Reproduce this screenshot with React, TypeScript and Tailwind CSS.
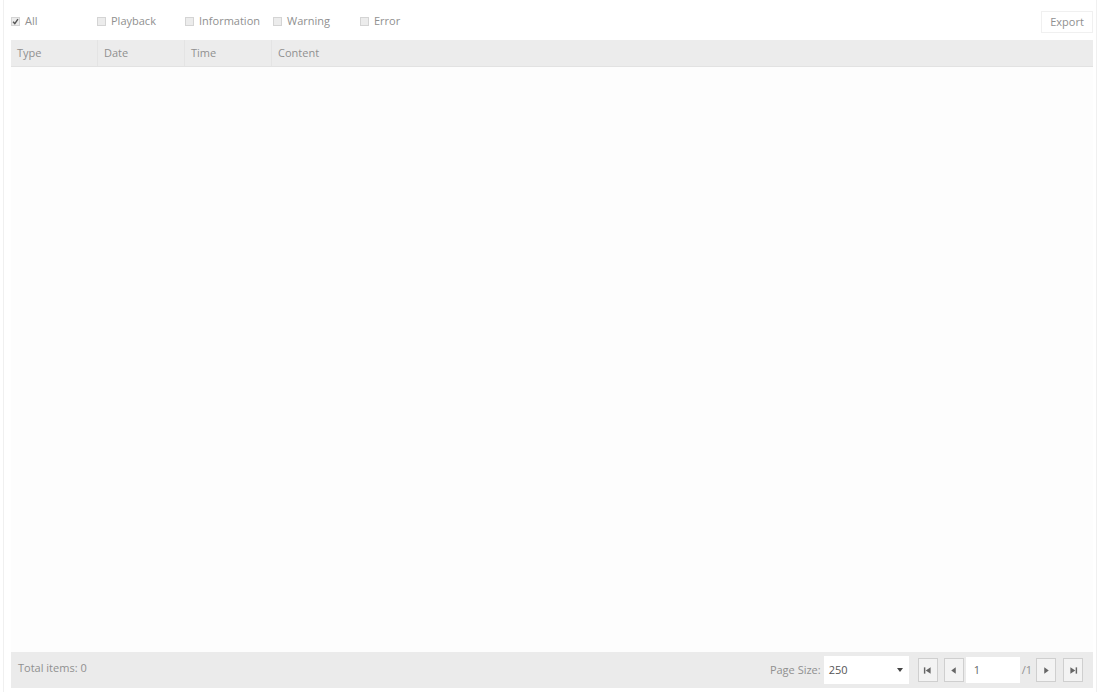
import React from "react";

const filters = [
  { label: "All", checked: true, w: "w-[86px]" },
  { label: "Playback", checked: false, w: "w-[88px]" },
  { label: "Information", checked: false, w: "w-[88px]" },
  { label: "Warning", checked: false, w: "w-[87px]" },
  { label: "Error", checked: false, w: "w-[80px]" },
];

const columns = ["Type", "Date", "Time", "Content"];

function Box({ checked }: { checked: boolean }) {
  return (
    <span className="flex h-[9px] w-[9px] items-center justify-center border border-[#d4d4d4] bg-[#ececec]">
      {checked && (
        <svg viewBox="0 0 10 10" className="h-[9px] w-[9px]">
          <path d="M1.5 5.5 L4 8 L8.5 1.5" fill="none" stroke="#555" strokeWidth="2" />
        </svg>
      )}
    </span>
  );
}

function PagerButton({ kind }: { kind: "first" | "prev" | "next" | "last" }) {
  return (
    <button className="flex h-[24px] w-[20px] items-center justify-center border border-[#cfcfcf] bg-[#f3f3f3]">
      <svg viewBox="0 0 10 10" className="h-[9px] w-[9px]" fill="#666">
        {kind === "first" && (
          <>
            <rect x="1" y="1.5" width="1.6" height="7" />
            <path d="M8.5 1.5 L3 5 L8.5 8.5 Z" />
          </>
        )}
        {kind === "prev" && <path d="M7.5 1.5 L2.5 5 L7.5 8.5 Z" />}
        {kind === "next" && <path d="M2.5 1.5 L7.5 5 L2.5 8.5 Z" />}
        {kind === "last" && (
          <>
            <path d="M1.5 1.5 L7 5 L1.5 8.5 Z" />
            <rect x="7.4" y="1.5" width="1.6" height="7" />
          </>
        )}
      </svg>
    </button>
  );
}

export default function App() {
  return (
    <div
      className="h-[692px] w-[1103px] overflow-hidden bg-white text-[11px] text-[#909090]"
      style={{ fontFamily: '"Open Sans", "Noto Sans", sans-serif' }}
    >
      <div className="ml-[3px] mr-[6px] flex h-full flex-col border-x border-[#f0f0f0] pl-[7px] pr-[3px]">
        {/* Filters */}
        <div className="flex h-[40px] items-center">
          <div className="flex flex-1 items-center pt-[2px]">
            {filters.map((f) => (
              <label key={f.label} className={`flex items-center gap-[5px] ${f.w}`}>
                <Box checked={f.checked} />
                <span>{f.label}</span>
              </label>
            ))}
          </div>
          <button className="mt-[4px] h-[22px] w-[52px] border border-[#f0f0f0] bg-white text-[11px] text-[#909090]">
            Export
          </button>
        </div>

        {/* Table */}
        <div className="flex flex-1 flex-col">
          <div className="flex h-[27px] items-center border-b border-[#e2e2e2] bg-[#ececec]">
            {columns.map((c, i) => (
              <div
                key={c}
                className={`flex h-full items-center px-[6px] ${
                  i < columns.length - 1 ? "w-[87px] border-r border-[#e4e4e4]" : "flex-1"
                }`}
              >
                {c}
              </div>
            ))}
          </div>
          <div className="flex-1 bg-[#fdfdfd]" />
          <div className="mb-[4px] flex h-[36px] items-center justify-between bg-[#ebebeb] pl-[7px] pr-[10px]">
            <span className="pb-[4px]">Total items: 0</span>
            <div className="flex items-center">
              <span className="mr-[3px]">Page Size:</span>
              <div className="flex h-[28px] w-[85px] items-center justify-between bg-white pl-[5px] pr-[6px] text-[#555]">
                <span>250</span>
                <svg viewBox="0 0 6 4" className="h-[4px] w-[6px]" fill="#444">
                  <path d="M0 0 H6 L3 4 Z" />
                </svg>
              </div>
              <div className="ml-[9px] flex items-center gap-[6px]">
                <PagerButton kind="first" />
                <PagerButton kind="prev" />
              </div>
              <div className="ml-[2px] flex h-[26px] w-[54px] items-center bg-white pl-[8px] text-[#666]">1</div>
              <span className="ml-[2px] mr-[4px]">/1</span>
              <div className="flex items-center gap-[7px]">
                <PagerButton kind="next" />
                <PagerButton kind="last" />
              </div>
            </div>
          </div>
        </div>
      </div>
    </div>
  );
}
